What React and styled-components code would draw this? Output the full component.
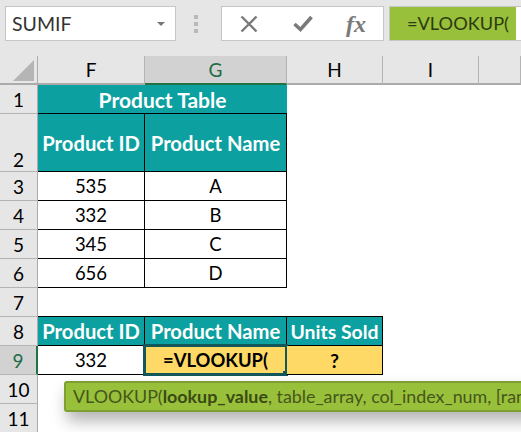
import React from 'react';
import styled, { createGlobalStyle } from 'styled-components';

const GlobalStyle = createGlobalStyle`
  html, body {
    margin: 0;
    padding: 0;
    background: #fff;
  }
`;

const Window = styled.div`
  position: relative;
  width: 521px;
  height: 432px;
  overflow: hidden;
  font-family: Lato, "Liberation Sans", sans-serif;
  color: #000;
`;

const FormulaBar = styled.div`
  display: flex;
  align-items: flex-start;
  height: 56px;
  box-sizing: border-box;
  padding: 6px 0 0 5px;
  background: #e6e6e6;
`;

const NameBox = styled.div`
  display: flex;
  align-items: center;
  justify-content: space-between;
  box-sizing: border-box;
  width: 171px;
  height: 35px;
  padding: 0 10px 0 6px;
  background: #fff;
  border: 1px solid #c6c6c6;
  font-size: 19.5px;
  color: #333;
`;

const Caret = styled.span`
  width: 0;
  height: 0;
  border-left: 4px solid transparent;
  border-right: 4px solid transparent;
  border-top: 4px solid #777;
`;

const Grip = styled.div`
  display: flex;
  flex-direction: column;
  gap: 3px;
  width: 6px;
  margin: 9px 21px 0 18px;
`;

const GripDot = styled.span`
  width: 4px;
  height: 4px;
  background: #b9b9b9;
`;

const ActionBox = styled.div`
  display: flex;
  align-items: center;
  box-sizing: border-box;
  width: 163px;
  height: 35px;
  margin-right: 5px;
  padding-left: 18px;
  gap: 35px;
  background: #fff;
  border: 1px solid #c6c6c6;
`;

const FxLabel = styled.span`
  font-family: "Liberation Serif", serif;
  font-style: italic;
  font-weight: 700;
  font-size: 24px;
  line-height: 1;
  margin-left: -2px;
  color: #7a7a7a;
`;

const FormulaBox = styled.div`
  flex: 1;
  height: 35px;
  box-sizing: border-box;
  background: #fff;
  border: 1px solid #c6c6c6;
  border-right: none;
`;

const FormulaText = styled.div`
  box-sizing: border-box;
  width: 126px;
  height: 100%;
  padding-left: 17px;
  background: #98c03a;
  color: #2c3a10;
  font-size: 18.2px;
  line-height: 33px;
  white-space: nowrap;
`;

const Sheet = styled.div`
  display: grid;
  grid-template-columns: 38px 107px 142px 96px 96px 42px;
  grid-template-rows: 29px 29px 58px repeat(9, 29px);
  font-size: 18.5px;
`;

const Corner = styled.div`
  position: relative;
  background: #e6e6e6;
  border-right: 1px solid #ababab;
  border-bottom: 2px solid #ababab;
  box-sizing: border-box;
`;

const CornerMark = styled.svg`
  position: absolute;
  left: 13px;
  top: 4px;
`;

const ColHead = styled.div`
  display: flex;
  align-items: center;
  justify-content: center;
  box-sizing: border-box;
  font-size: 19px;
  background: ${({ $active }) => ($active ? '#d2d2d2' : '#e6e6e6')};
  color: ${({ $active }) => ($active ? '#1f6b45' : '#000')};
  border-right: 1px solid #b4b4b4;
  border-bottom: 2px solid ${({ $active }) => ($active ? '#217346' : '#ababab')};
`;

const RowHead = styled.div`
  display: flex;
  align-items: ${({ $tall }) => ($tall ? 'flex-end' : 'center')};
  justify-content: center;
  box-sizing: border-box;
  font-size: 19px;
  background: ${({ $active }) => ($active ? '#d2d2d2' : '#e6e6e6')};
  color: ${({ $active }) => ($active ? '#1f6b45' : '#000')};
  border-right: ${({ $active }) => ($active ? '2px solid #217346' : '1px solid #ababab')};
  border-bottom: 1px solid #b4b4b4;
`;

const Cell = styled.div`
  position: relative;
  display: flex;
  align-items: center;
  justify-content: center;
  box-sizing: border-box;
  white-space: nowrap;
  grid-column: ${({ $span }) => ($span ? `span ${$span}` : 'auto')};
  font-size: ${({ $size }) => ($size ? `${$size}px` : 'inherit')};
  font-weight: ${({ $bold }) => ($bold ? 700 : 400)};
  color: ${({ $head }) => ($head ? '#fff' : '#000')};
  background: ${({ $fill }) => $fill || 'transparent'};
  border-right: ${({ $noRight }) => ($noRight ? 'none' : '1px solid #000')};
  border-bottom: ${({ $noBottom }) => ($noBottom ? 'none' : '1px solid #000')};
`;

const Blank = styled.div`
  box-sizing: border-box;
  border-bottom: ${({ $line }) => ($line ? '1px solid #000' : 'none')};
`;

const Selection = styled.span`
  position: absolute;
  left: -2px;
  top: -2px;
  right: -2px;
  bottom: -2px;
  border: 3px solid #12575a;
  pointer-events: none;
`;

const Handle = styled.span`
  position: absolute;
  right: -3px;
  bottom: -3px;
  width: 5px;
  height: 5px;
  background: #12575a;
`;

const Tooltip = styled.div`
  position: absolute;
  left: 64px;
  top: 381px;
  width: 480px;
  height: 31px;
  box-sizing: border-box;
  padding-left: 7px;
  background: #98c03a;
  border: 2px solid #7f9f33;
  border-radius: 3px;
  box-shadow: 3px 9px 16px rgba(0, 0, 0, 0.3);
  color: #46561c;
  font-size: 17.85px;
  line-height: 27px;
  white-space: nowrap;
`;

const ArgName = styled.b`
  font-weight: 700;
  color: #3a4a14;
`;

const TEAL = '#0ca0a0';
const YELLOW = '#ffd966';

const products = [
  ['535', 'A'],
  ['332', 'B'],
  ['345', 'C'],
  ['656', 'D'],
];

const CloseIcon = () => (
  <svg width="18" height="18" viewBox="0 0 18 18">
    <path d="M1.5 1.5 L16.5 16.5 M16.5 1.5 L1.5 16.5" stroke="#7a7a7a" strokeWidth="2.4" fill="none" />
  </svg>
);

const CheckIcon = () => (
  <svg width="20" height="18" viewBox="0 0 20 18">
    <path d="M1.5 9 L7.5 14.5 L18.5 2" stroke="#7a7a7a" strokeWidth="3.6" fill="none" />
  </svg>
);

export default function App() {
  return (
    <Window>
      <GlobalStyle />
      <FormulaBar>
        <NameBox>
          SUMIF
          <Caret />
        </NameBox>
        <Grip>
          <GripDot />
          <GripDot />
          <GripDot />
        </Grip>
        <ActionBox>
          <CloseIcon />
          <CheckIcon />
          <FxLabel>fx</FxLabel>
        </ActionBox>
        <FormulaBox>
          <FormulaText>=VLOOKUP(</FormulaText>
        </FormulaBox>
      </FormulaBar>

      <Sheet>
        <Corner>
          <CornerMark width="21" height="21" viewBox="0 0 21 21">
            <path d="M21 0 V21 H0 Z" fill="#b5b5b5" />
          </CornerMark>
        </Corner>
        <ColHead>F</ColHead>
        <ColHead $active>G</ColHead>
        <ColHead>H</ColHead>
        <ColHead>I</ColHead>
        <ColHead />

        <RowHead>1</RowHead>
        <Cell $span={2} $head $bold $size={21} $fill={TEAL} $noRight>Product Table</Cell>
        <Blank />
        <Blank />
        <Blank />

        <RowHead $tall>2</RowHead>
        <Cell $head $bold $size={20.2} $fill={TEAL}>Product ID</Cell>
        <Cell $head $bold $size={20.2} $fill={TEAL}>Product Name</Cell>
        <Blank />
        <Blank />
        <Blank />

        {products.map(([id, name], i) => (
          <React.Fragment key={id}>
            <RowHead>{i + 3}</RowHead>
            <Cell>{id}</Cell>
            <Cell>{name}</Cell>
            <Blank />
            <Blank />
            <Blank />
          </React.Fragment>
        ))}

        <RowHead>7</RowHead>
        <Blank $line />
        <Blank $line />
        <Blank $line />
        <Blank />
        <Blank />

        <RowHead>8</RowHead>
        <Cell $head $bold $size={20.2} $fill={TEAL}>Product ID</Cell>
        <Cell $head $bold $size={20.2} $fill={TEAL}>Product Name</Cell>
        <Cell $head $bold $size={19.4} $fill={TEAL}>Units Sold</Cell>
        <Blank />
        <Blank />

        <RowHead $active>9</RowHead>
        <Cell>332</Cell>
        <Cell $bold $size={18.4} $fill={YELLOW}>
          =VLOOKUP(
          <Selection>
            <Handle />
          </Selection>
        </Cell>
        <Cell $bold $size={19} $fill={YELLOW}>?</Cell>
        <Blank />
        <Blank />

        <RowHead>10</RowHead>
        <Blank />
        <Blank />
        <Blank />
        <Blank />
        <Blank />

        <RowHead>11</RowHead>
        <Blank />
        <Blank />
        <Blank />
        <Blank />
        <Blank />
      </Sheet>

      <Tooltip>
        VLOOKUP(<ArgName>lookup_value</ArgName>, table_array, col_index_num, [range_lookup])
      </Tooltip>
    </Window>
  );
}
